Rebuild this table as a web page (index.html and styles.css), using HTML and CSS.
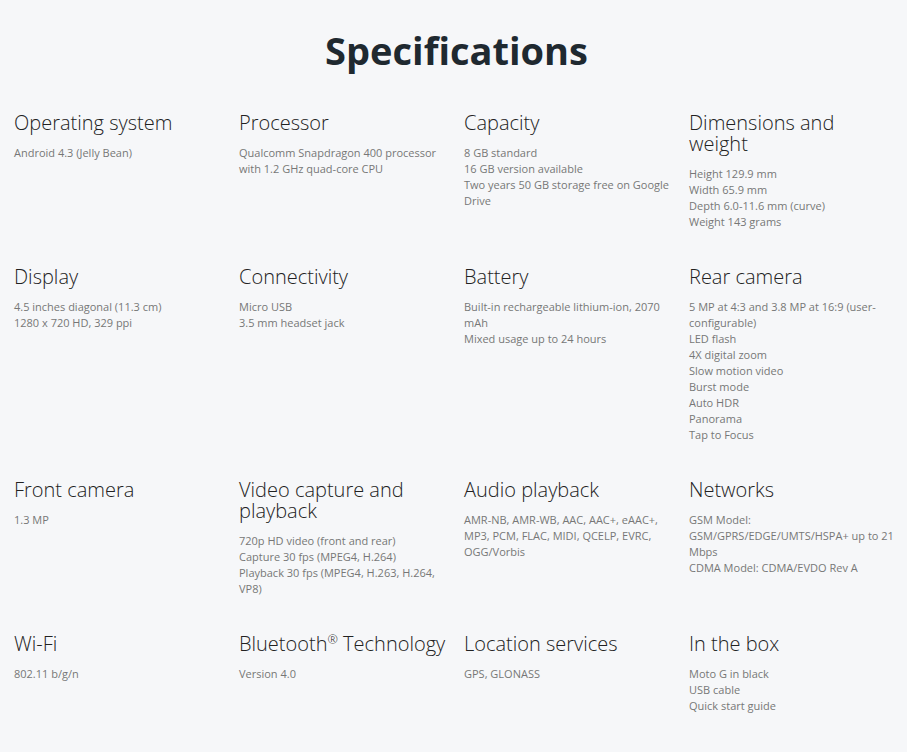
FILE: index.html
```html
<!DOCTYPE html>
<html>
<head>
<meta charset="utf-8">
<link rel="stylesheet" href="styles.css">
</head>
<body>
<main class="page">
  <h1 class="title">Specifications</h1>
  <section class="specs">
    <div class="spec">
      <h2>Operating system</h2>
      <ul><li>Android 4.3 (Jelly Bean)</li></ul>
    </div>
    <div class="spec">
      <h2>Processor</h2>
      <ul><li>Qualcomm Snapdragon 400 processor with 1.2 GHz quad-core CPU</li></ul>
    </div>
    <div class="spec">
      <h2>Capacity</h2>
      <ul><li>8 GB standard</li><li>16 GB version available</li><li>Two years 50 GB storage free on Google Drive</li></ul>
    </div>
    <div class="spec">
      <h2>Dimensions and weight</h2>
      <ul><li>Height 129.9 mm</li><li>Width 65.9 mm</li><li>Depth 6.0-11.6 mm (curve)</li><li>Weight 143 grams</li></ul>
    </div>

    <div class="spec">
      <h2>Display</h2>
      <ul><li>4.5 inches diagonal (11.3 cm)</li><li>1280 x 720 HD, 329 ppi</li></ul>
    </div>
    <div class="spec">
      <h2>Connectivity</h2>
      <ul><li>Micro USB</li><li>3.5 mm headset jack</li></ul>
    </div>
    <div class="spec">
      <h2>Battery</h2>
      <ul><li>Built-in rechargeable lithium-ion, 2070 mAh</li><li>Mixed usage up to 24 hours</li></ul>
    </div>
    <div class="spec">
      <h2>Rear camera</h2>
      <ul><li>5 MP at 4:3 and 3.8 MP at 16:9 (user-configurable)</li><li>LED flash</li><li>4X digital zoom</li><li>Slow motion video</li><li>Burst mode</li><li>Auto HDR</li><li>Panorama</li><li>Tap to Focus</li></ul>
    </div>

    <div class="spec">
      <h2>Front camera</h2>
      <ul><li>1.3 MP</li></ul>
    </div>
    <div class="spec">
      <h2>Video capture and playback</h2>
      <ul><li>720p HD video (front and rear)</li><li>Capture 30 fps (MPEG4, H.264)</li><li>Playback 30 fps (MPEG4, H.263, H.264, VP8)</li></ul>
    </div>
    <div class="spec">
      <h2>Audio playback</h2>
      <ul><li>AMR-NB, AMR-WB, AAC, AAC+, eAAC+, MP3, PCM, FLAC, MIDI, QCELP, EVRC, OGG/Vorbis</li></ul>
    </div>
    <div class="spec">
      <h2>Networks</h2>
      <ul><li>GSM Model: GSM/GPRS/EDGE/UMTS/HSPA+ up to 21 Mbps</li><li>CDMA Model: CDMA/EVDO Rev A</li></ul>
    </div>

    <div class="spec">
      <h2>Wi-Fi</h2>
      <ul><li>802.11 b/g/n</li></ul>
    </div>
    <div class="spec">
      <h2>Bluetooth<sup>®</sup> Technology</h2>
      <ul><li>Version 4.0</li></ul>
    </div>
    <div class="spec">
      <h2>Location services</h2>
      <ul><li>GPS, GLONASS</li></ul>
    </div>
    <div class="spec">
      <h2>In the box</h2>
      <ul><li>Moto G in black</li><li>USB cable</li><li>Quick start guide</li></ul>
    </div>
  </section>
</main>
</body>
</html>
```

FILE: styles.css
```css
html, body {
  margin: 0;
  padding: 0;
  background: #f6f7f9;
}
body {
  font-family: "Open Sans", "Liberation Sans", sans-serif;
  overflow: hidden;
}
.page {
  padding: 26px 0 0 14px;
}
.title {
  margin: 0 8px 0 0;
  text-align: center;
  font-size: 38px;
  line-height: 48px;
  font-weight: 700;
  color: #1f2930;
}
.specs {
  margin-top: 38px;
  display: grid;
  grid-template-columns: repeat(4, 208px);
  column-gap: 17px;
  row-gap: 36px;
}
.spec h2 {
  margin: 0 0 12px 0;
  font-size: 20px;
  line-height: 21px;
  font-weight: 300;
  color: #222;
}
.spec h2 sup {
  font-size: 12.5px;
  line-height: 0;
  vertical-align: 7px;
}
.spec ul {
  margin: 0;
  padding: 0;
  list-style: none;
}
.spec li {
  font-size: 11px;
  line-height: 16px;
  color: #777;
}
```
